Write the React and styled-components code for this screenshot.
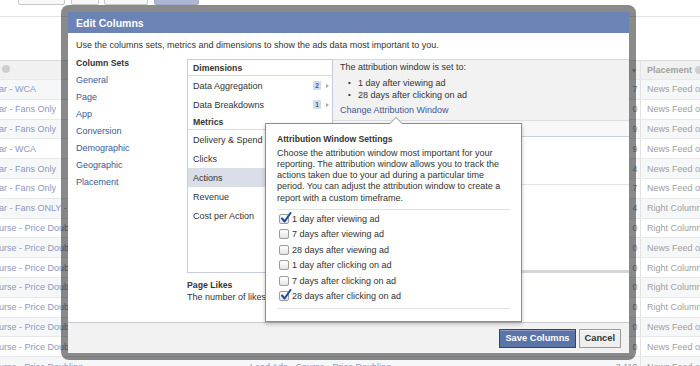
import styled, { createGlobalStyle } from 'styled-components';

const GlobalStyle = createGlobalStyle`
  html, body {
    margin: 0;
    padding: 0;
    background: #fff;
  }
  body {
    font-family: "Liberation Sans", Arial, Helvetica, sans-serif;
    color: #333;
    overflow: hidden;
  }
  * {
    box-sizing: border-box;
  }
`;

const Page = styled.div`
  position: relative;
  width: 700px;
  height: 366px;
  overflow: hidden;
`;

/* ---------- background report table ---------- */

const Toolbar = styled.div`
  height: 17px;
  border-bottom: 1px solid #e4e4e4;
  display: flex;
  align-items: flex-start;
  gap: 5.5px;
  padding-left: 18px;
`;

const ToolButton = styled.div`
  width: ${p => p.$w}px;
  height: 20px;
  margin-top: -15px;
  border: 1px solid ${p => (p.$primary ? '#a3afca' : '#c8c8c8')};
  background: ${p => (p.$primary ? '#abb7d3' : '#f7f7f7')};
  border-radius: 2px;
`;

const Table = styled.div`
  margin-top: 43px;
  font-size: 9px;
`;

const Row = styled.div`
  display: grid;
  grid-template-columns: 250px 350px 40px 60px;
  align-items: center;
  height: ${p => (p.$head ? '20px' : '19.8px')};
  background: ${p => (p.$head ? '#f1f1f1' : p.$alt ? '#f6f7f9' : '#fff')};
  border-top: ${p => (p.$head ? '1px solid #dcdcdc' : 'none')};
  border-bottom: 1px solid #e8e8e8;
`;

const NameCell = styled.div`
  margin-left: -1px;
  white-space: nowrap;
  overflow: hidden;
  color: #8b99bf;
`;

const MidCell = styled.div`
  white-space: nowrap;
  overflow: hidden;
  color: #8b99bf;
`;

const NumCell = styled.div`
  text-align: right;
  padding-right: 2.5px;
  color: #9a9a9a;
`;

const PlaceCell = styled.div`
  height: 100%;
  display: flex;
  align-items: center;
  gap: 3px;
  padding-left: 6px;
  border-left: 1px solid #e2e2e2;
  white-space: nowrap;
  overflow: hidden;
  color: #a0a0a0;
  font-weight: ${p => (p.$head ? 'bold' : 'normal')};
`;

const InfoDot = styled.span`
  display: inline-flex;
  align-items: center;
  justify-content: center;
  flex: none;
  width: 8px;
  height: 8px;
  margin-left: ${p => p.$ml || 0}px;
  border-radius: 50%;
  background: #cfcfcf;
  color: #fff;
  font: italic bold 6px "Liberation Serif", serif;
`;

const SortArrow = styled.span`
  color: #b0b0b0;
  font-size: 7px;
`;

/* ---------- modal ---------- */

const Modal = styled.div`
  position: absolute;
  left: 61px;
  top: 5px;
  width: 575px;
  height: 355px;
  display: flex;
  flex-direction: column;
  border: 7px solid rgba(0, 0, 0, 0.46);
  border-radius: 8px;
  background: #fff;
  background-clip: padding-box;
`;

const ModalHeader = styled.div`
  height: 21px;
  flex: none;
  display: flex;
  align-items: center;
  padding-left: 8px;
  background: #6c84b5;
  color: #fff;
  font-weight: bold;
  font-size: 10.5px;
`;

const ModalBody = styled.div`
  flex: 1;
  padding: 6.5px 0 0 8px;
  font-size: 9px;
`;

const Intro = styled.div`
  line-height: 11px;
  margin-bottom: 8.5px;
  white-space: nowrap;
`;

const Columns = styled.div`
  display: grid;
  grid-template-columns: 111px 146px 1fr;
  align-items: start;
`;

const SmallTitle = styled.div`
  font-weight: bold;
  font-size: 8.7px;
  line-height: ${p => p.$lh || 10}px;
  margin-top: ${p => p.$mt || 0}px;
  color: #333;
  white-space: nowrap;
`;

const SetList = styled.div`
  display: flex;
  flex-direction: column;
  margin-top: 4px;
`;

const SetLink = styled.a`
  line-height: 17px;
  color: #3b5998;
  text-decoration: none;
`;

const ListBox = styled.div`
  height: 214px;
  border: 1px solid #c5cddd;
  background: #fff;
`;

const GroupHead = styled.div`
  height: 16px;
  display: flex;
  align-items: center;
  padding-left: 5px;
  border-bottom: 1px solid #d4d9e3;
  font-weight: bold;
  font-size: 8.7px;
`;

const ListItem = styled.div`
  height: 19px;
  display: flex;
  align-items: center;
  justify-content: space-between;
  padding: 0 3px 0 5px;
  background: ${p => (p.$active ? '#d9dee8' : 'transparent')};
  white-space: nowrap;
`;

const ItemMeta = styled.div`
  display: flex;
  align-items: center;
  gap: 5px;
`;

const Badge = styled.span`
  width: 8px;
  height: 9px;
  display: flex;
  align-items: center;
  justify-content: center;
  background: #d4dbea;
  color: #3b5998;
  font-size: 6.5px;
  font-weight: bold;
  border-radius: 1px;
`;

const Chevron = styled.span`
  width: 0;
  height: 0;
  border-left: 3px solid #a8a8a8;
  border-top: 2.5px solid transparent;
  border-bottom: 2.5px solid transparent;
`;

const Note = styled.div`
  margin-top: 6.5px;
  white-space: nowrap;
`;

const NoteText = styled.div`
  line-height: 12px;
`;

const RightPanel = styled.div`
  height: 214px;
  border-top: 1px solid #d5d9e1;
  border-bottom: 3px solid #d2d6de;
  display: flex;
  flex-direction: column;
`;

const Summary = styled.div`
  height: 61px;
  padding: 1.5px 7px 0;
  background: #f2f2f2;
  border-bottom: 1px solid #dadde3;
`;

const SummaryLine = styled.div`
  line-height: 11px;
`;

const Bullets = styled.ul`
  list-style: none;
  margin: 4.5px 0 0;
  padding: 0;
`;

const BulletItem = styled.li`
  display: flex;
  line-height: 12px;
  &::before {
    content: '•';
    width: 10px;
    margin-left: 8px;
    font-size: 8px;
  }
`;

const TextLink = styled.a`
  display: block;
  margin-top: 3px;
  line-height: 12px;
  color: #3b5998;
  text-decoration: none;
`;

const PanelHead = styled.div`
  height: 16px;
  background: #f8f8f8;
  border-bottom: 1px solid #c8d0df;
`;

const PanelRow = styled.div`
  height: 48px;
  border-bottom: 1px solid #e4e4e4;
`;

const ModalFooter = styled.div`
  height: 31px;
  flex: none;
  display: flex;
  align-items: center;
  justify-content: flex-end;
  gap: 3px;
  padding-right: 8px;
  background: #f2f2f2;
  border-top: 1px solid #cacaca;
`;

const Button = styled.button`
  height: 19px;
  padding: 0 5px;
  font-family: inherit;
  font-weight: bold;
  font-size: 9.3px;
  border: 1px solid ${p => (p.$primary ? '#29447e' : '#999')};
  background: ${p => (p.$primary ? '#5b74a8' : '#efefef')};
  color: ${p => (p.$primary ? '#fff' : '#333')};
  box-shadow: inset 0 1px 0 ${p => (p.$primary ? '#8a9cc2' : '#fff')};
`;

/* ---------- attribution popover ---------- */

const Popover = styled.div`
  position: absolute;
  left: 197px;
  top: 111px;
  width: 257px;
  height: 199px;
  padding: 9.5px 11px 0;
  background: #fff;
  border: 1px solid #8e8e8e;
  box-shadow: 0 2px 4px rgba(0, 0, 0, 0.25);
  font-size: 9px;

  &::before,
  &::after {
    content: '';
    position: absolute;
    width: 0;
    height: 0;
    border-style: solid;
    border-color: transparent;
  }
  &::before {
    left: 123px;
    top: -7px;
    border-width: 0 7px 7px;
    border-bottom-color: #8e8e8e;
  }
  &::after {
    left: 124px;
    top: -6px;
    border-width: 0 6px 6px;
    border-bottom-color: #fff;
  }
`;

const PopTitle = styled.div`
  font-weight: bold;
  font-size: 8.6px;
  line-height: 11px;
`;

const PopText = styled.p`
  margin: 3px 0 0;
  line-height: 11.25px;
`;

const Choices = styled.div`
  margin-top: 5.5px;
  padding: 1px 0 4.5px 2px;
  border-top: 1px solid #e2e2e2;
  border-bottom: 1px solid #e2e2e2;
`;

const Choice = styled.label`
  height: 15.4px;
  display: flex;
  align-items: center;
  gap: 3px;
  white-space: nowrap;
`;

const Box = styled.span`
  position: relative;
  width: 10px;
  height: 10px;
  flex: none;
  border: 1px solid #9d9d9d;
  border-radius: 2px;
  background: linear-gradient(#ffffff, #e4e4e4);

  svg {
    position: absolute;
    left: 0;
    top: -3px;
  }
`;

const Tick = () => (
  <svg width="12" height="12" viewBox="0 0 12 12">
    <path d="M2 6.5 L4.6 9.5 L10.5 1" fill="none" stroke="#1d4a9b" strokeWidth="2" strokeLinecap="round" strokeLinejoin="round" />
  </svg>
);

/* ---------- data ---------- */

const rows = [
  ['ar - WCA', '7', 'News Feed on Desktop'],
  ['ar - Fans Only', '0', 'News Feed on Desktop'],
  ['ar - Fans Only', '9', 'News Feed on Desktop'],
  ['ar - WCA', '9', 'News Feed on Desktop'],
  ['ar - Fans Only', '4', 'News Feed on Desktop'],
  ['ar - Fans Only', '7', 'News Feed on Desktop'],
  ['ar - Fans ONLY - (copy)', '4', 'Right Column'],
  ['urse - Price Doubling', '0', 'Right Column'],
  ['urse - Price Doubling', '0', 'News Feed on Desktop'],
  ['urse - Price Doubling', '0', 'Right Column'],
  ['urse - Price Doubling', '0', 'Right Column'],
  ['urse - Price Doubling', '0', 'Right Column'],
  ['urse - Price Doubling', '0', 'News Feed on Desktop'],
  ['urse - Price Doubling', '0', 'News Feed on Desktop'],
  ['urse - Price Doubling', '3,110', 'News Feed on Desktop'],
];

const columnSets = ['General', 'Page', 'App', 'Conversion', 'Demographic', 'Geographic', 'Placement'];

const metrics = ['Delivery & Spend', 'Clicks', 'Actions', 'Revenue', 'Cost per Action'];

const windows = [
  ['1 day after viewing ad', true],
  ['7 days after viewing ad', false],
  ['28 days after viewing ad', false],
  ['1 day after clicking on ad', false],
  ['7 days after clicking on ad', false],
  ['28 days after clicking on ad', true],
];

const App = () => (
  <Page>
    <GlobalStyle />
    <Toolbar>
      <ToolButton $w={47} />
      <ToolButton $w={28} />
      <ToolButton $w={44} />
      <ToolButton $w={45} $primary />
    </Toolbar>

    <Table>
      <Row $head>
        <NameCell><InfoDot $ml={3} /></NameCell>
        <MidCell />
        <NumCell><SortArrow>▼</SortArrow></NumCell>
        <PlaceCell $head>Placement <InfoDot /></PlaceCell>
      </Row>
      {rows.map(([name, num, place], i) => (
        <Row key={i} $alt={i % 2 === 0}>
          <NameCell>{name}</NameCell>
          <MidCell>Lead Ads - Course - Price Doubling</MidCell>
          <NumCell>{num}</NumCell>
          <PlaceCell>{place}</PlaceCell>
        </Row>
      ))}
    </Table>

    <Modal>
      <ModalHeader>Edit Columns</ModalHeader>
      <ModalBody>
        <Intro>Use the columns sets, metrics and dimensions to show the ads data most important to you.</Intro>
        <Columns>
          <div>
            <SmallTitle $mt={-1}>Column Sets</SmallTitle>
            <SetList>
              {columnSets.map(s => (
                <SetLink key={s} href="#">{s}</SetLink>
              ))}
            </SetList>
          </div>

          <div>
            <ListBox>
              <GroupHead>Dimensions</GroupHead>
              <ListItem>
                Data Aggregation
                <ItemMeta><Badge>2</Badge><Chevron /></ItemMeta>
              </ListItem>
              <ListItem>
                Data Breakdowns
                <ItemMeta><Badge>1</Badge><Chevron /></ItemMeta>
              </ListItem>
              <GroupHead>Metrics</GroupHead>
              {metrics.map(m => (
                <ListItem key={m} $active={m === 'Actions'}>{m}</ListItem>
              ))}
            </ListBox>
            <Note>
              <SmallTitle $lh={11}>Page Likes</SmallTitle>
              <NoteText>The number of likes on your Page as a result of your ad.</NoteText>
            </Note>
          </div>

          <RightPanel>
            <Summary>
              <SummaryLine>The attribution window is set to:</SummaryLine>
              <Bullets>
                <BulletItem>1 day after viewing ad</BulletItem>
                <BulletItem>28 days after clicking on ad</BulletItem>
              </Bullets>
              <TextLink href="#">Change Attribution Window</TextLink>
            </Summary>
            <PanelHead />
            <PanelRow />
          </RightPanel>
        </Columns>
      </ModalBody>
      <ModalFooter>
        <Button $primary>Save Columns</Button>
        <Button>Cancel</Button>
      </ModalFooter>

      <Popover>
        <PopTitle>Attribution Window Settings</PopTitle>
        <PopText>
          Choose the attribution window most important for your reporting. The attribution window allows you to track the
          actions taken due to your ad during a particular time period. You can adjust the attribution window to create a
          report with a custom timeframe.
        </PopText>
        <Choices>
          {windows.map(([label, on]) => (
            <Choice key={label}>
              <Box>{on && <Tick />}</Box>
              {label}
            </Choice>
          ))}
        </Choices>
      </Popover>
    </Modal>
  </Page>
);

export default App;
